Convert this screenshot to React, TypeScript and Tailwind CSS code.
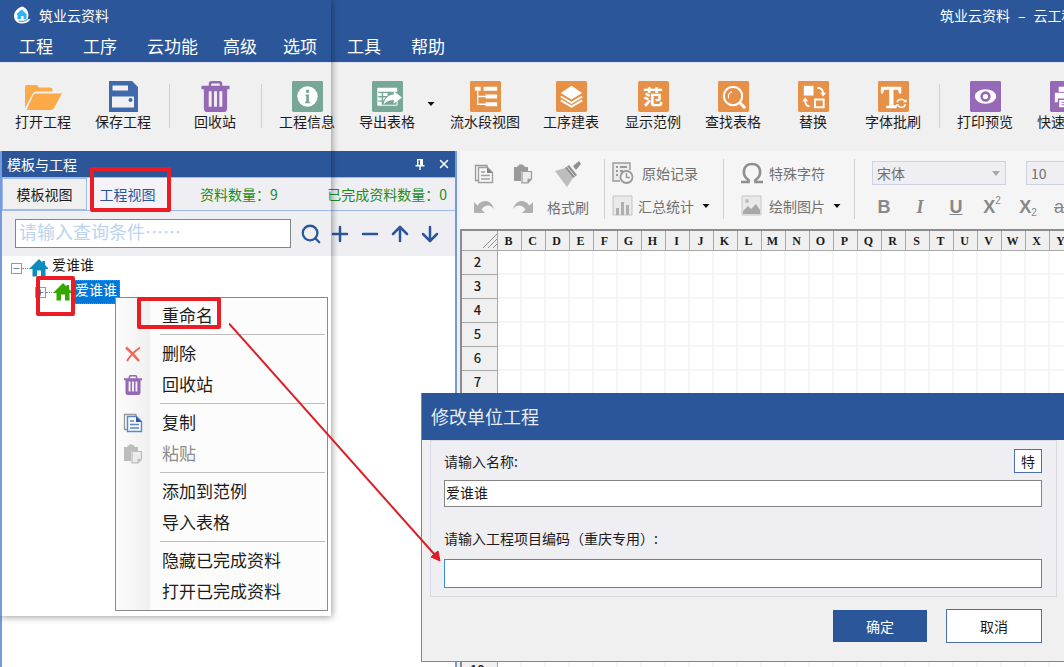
import type { ReactNode } from "react";
import { ArrowDown, ArrowUp, Minus, Plus, Search, X } from "lucide-react";

const SANS = "font-['Noto_Sans_CJK_SC',sans-serif]";

const menus = [
  { label: "工程", width: "w-16" },
  { label: "工序", width: "w-16" },
  { label: "云功能", width: "w-[76px]" },
  { label: "高级", width: "w-[60px]" },
  { label: "选项", width: "w-16" },
  { label: "工具", width: "w-16" },
  { label: "帮助", width: "w-16" },
];

const columns = "BCDEFGHIJKLMNOPQRSTUVWXYZ".split("");
const rows = Array.from({ length: 18 }, (_, i) => i + 2);

function Tile({ color, children }: { color: string; children: ReactNode }) {
  return (
    <svg viewBox="0 0 32 32" className="size-[31px]" aria-hidden="true">
      <rect width="32" height="32" rx="1.5" fill={color} />
      {children}
    </svg>
  );
}

// Solid bin with three slots cut through the body.
function TrashIcon({ className }: { className: string }) {
  return (
    <svg viewBox="0 0 32 32" className={className} aria-hidden="true" fill="#9568b4" fillRule="evenodd">
      <path d="M9 5V3Q9 0 12 0H20Q23 0 23 3V5H30.500V8.500H28V28Q28 32 24 32H8Q4 32 4 28V8.500H1.500V5ZM11.500 5H20.500V3.500Q20.500 2.500 19.500 2.500H12.500Q11.500 2.500 11.500 3.500ZM9 10.500V26.500H12V10.500ZM14.500 10.500V26.500H17.500V10.500ZM20 10.500V26.500H23V10.500Z" />
    </svg>
  );
}

function CopyIcon({ className, line, fold }: { className: string; line: string; fold: string }) {
  return (
    <svg viewBox="0 0 20 20" className={className} aria-hidden="true" fill="none">
      <path d="M4 16.500H1.500V1.500H13V3" stroke="#989898" strokeWidth="1.300" />
      <path d="M4.500 3.500H13.500L18.500 8.500V18.500H4.500Z" fill="#f6f8fb" stroke={line} strokeWidth="1.400" />
      <path d="M13 3.500L18.500 9H13Z" fill={fold} />
      <path d="M7 8H11M7 11.500H16M7 15H16" stroke={line} strokeWidth="1.600" />
    </svg>
  );
}

function PasteIcon({ className, color }: { className: string; color: string }) {
  return (
    <svg viewBox="0 0 20 20" className={className} aria-hidden="true">
      <path d="M1 3H4.500V1.500H6V0.500H10V1.500H11.500V3H15V7H8V17H1Z" fill={color} />
      <path d="M9 7.500H18.500V15L15 18.800H9Z" fill="#ebebeb" stroke={color} strokeWidth="1.200" />
      <path d="M14.500 19V14.800H18.500Z" fill={color} />
    </svg>
  );
}

function House({ color }: { color: string }) {
  return (
    <svg viewBox="0 0 18 18" className="size-[18px]" aria-hidden="true" fill={color}>
      <path d="M9 0L12.500 3.500V2H15V6L18 9V10H15.500V17.500H11V11.500H7V17.500H2.500V10H0V9Z" />
    </svg>
  );
}

function Caret() {
  return (
    <svg viewBox="0 0 8 4" className="h-1 w-2" aria-hidden="true">
      <path d="M0.500 0H7.500L4 4Z" fill="#111" />
    </svg>
  );
}

function Tool({ icon, label, width = "w-20" }: { icon: ReactNode; label: string; width?: string }) {
  return (
    <button type="button" className={`${width} flex shrink-0 flex-col items-center text-sm leading-[18px] whitespace-nowrap`}>
      {icon}
      {label}
    </button>
  );
}

function ToolDivider() {
  return (
    <div className="flex w-3 shrink-0 justify-center">
      <div className="mt-[3px] h-11 w-px bg-[#d0d0d0]" />
    </div>
  );
}

function TitleBar() {
  return (
    <header className="h-[62px] shrink-0 overflow-hidden bg-[#2b579a] text-white">
      <div className="flex h-[30px] items-center text-sm">
        <svg viewBox="0 0 18 18" className="ml-[13px] size-[18px]" aria-hidden="true">
          <path d="M9.500 0.500C5 1.500 1 5.500 1 10C1 14.500 4.500 17.500 8.500 17.500C12.500 17.500 16 16 17.500 13L14.500 13.500C17 8 14.500 2.500 9.500 0.500Z" fill="#fff" />
          <path d="M3.500 8L8.500 3.500L13.500 8V13H10.500V10H8V13H4.500V9Z" fill="#2cb5ee" />
          <path d="M5.500 15C9 16 12 15 14.500 13.500" fill="none" stroke="#2b579a" strokeWidth="0.800" />
        </svg>
        <span className="ml-2">筑业云资料</span>
        <span className="ml-auto w-[124px] shrink-0 overflow-hidden whitespace-nowrap">
          筑业云资料<span className="mx-2">–</span>云工程
        </span>
      </div>
      <nav className="flex h-8 items-center pl-[19px] text-[17px]">
        {menus.map((m) => (
          <button key={m.label} type="button" className={`${m.width} shrink-0 text-left`}>
            {m.label}
          </button>
        ))}
      </nav>
    </header>
  );
}

function MainToolbar() {
  const orange = "#e69147";
  return (
    <div className="flex h-[89px] shrink-0 overflow-hidden border-t border-[#dfe3f5] pt-[18px] pl-[3px]">
      <Tool
        label="打开工程"
        icon={
          <svg viewBox="0 0 40 31" className="h-[31px] w-10" aria-hidden="true" fill="#fbaa47">
            <path d="M2 27V6Q2 4 4 4H13Q15 4 16 6.500H27Q29.500 6.500 29.500 9V10.500H13Q10.500 10.500 9.500 13Z" />
            <path d="M13 12.500H39L31 27Q30 29 28 29H3.500L10 14.500Q11 12.500 13 12.500Z" />
          </svg>
        }
      />
      <Tool
        label="保存工程"
        icon={
          <svg viewBox="0 0 31 31" className="size-[31px]" aria-hidden="true">
            <path d="M1 0H24L30 6V31H1Z" fill="#4069ad" />
            <path d="M4.500 4.500H20V9.500H4.500ZM4 15.500H26V26.500H4Z" fill="#f0f0f0" />
            <circle cx="22.500" cy="19" r="2" fill="#4069ad" />
          </svg>
        }
      />
      <ToolDivider />
      <Tool label="回收站" icon={<TrashIcon className="size-[31px]" />} />
      <ToolDivider />
      <Tool
        label="工程信息"
        icon={
          <Tile color="#77a796">
            <circle cx="16" cy="16" r="10.500" fill="#fff" />
            <path d="M14.500 9H17.500V12H14.500ZM14 14H17.500V21.500H18.500V23H13.500V21.500H14.700V15.500H14Z" fill="#77a796" />
          </Tile>
        }
      />
      <Tool
        label="导出表格"
        icon={
          <Tile color="#77a796">
            <path d="M6 7H26V11H6ZM6 12.500H10V15.500H6ZM11.500 12.500H16V15.500H11.500ZM6 17H10V20H6ZM6 21.500H10V25H6ZM11.500 17H14L11.500 20Z" fill="#fff" />
            <path d="M6 7V25H26V21" fill="none" stroke="#fff" />
            <path d="M12 24C13 18 17 14 22.500 14V10.500L31 17L22.500 23.500V19.500C18 19.500 15 21 12 24Z" fill="#fff" />
          </Tile>
        }
      />
      <button type="button" aria-label="导出选项" className="flex h-[46px] w-3.5 shrink-0 items-center">
        <Caret />
      </button>
      <Tool
        label="流水段视图"
        width="w-[88px]"
        icon={
          <Tile color={orange}>
            <path d="M5 6H11V10H5ZM14 6H28V10H14ZM16 14H28V18H16ZM16 22H28V26H16Z" fill="#fff" />
            <path d="M8 10V24H16M8 16H16" fill="none" stroke="#fff" strokeWidth="1.300" />
          </Tile>
        }
      />
      <Tool
        label="工序建表"
        width="w-[84px]"
        icon={
          <Tile color={orange}>
            <path d="M16 5L27 12.500L16 19L5 12.500Z" fill="#fff" />
            <path d="M5 16L16 22.500L27 16M5 20L16 26.500L27 20" fill="none" stroke="#fff" strokeWidth="2" />
          </Tile>
        }
      />
      <Tool
        label="显示范例"
        icon={
          <span className="flex size-[31px] items-center justify-center rounded-xs bg-[#e69147] text-xl font-bold text-white">范</span>
        }
      />
      <Tool
        label="查找表格"
        icon={
          <Tile color={orange}>
            <circle cx="15.500" cy="15.500" r="9.500" fill="none" stroke="#fff" strokeWidth="2.200" />
            <path d="M22 22L28 28" stroke="#fff" strokeWidth="3" />
            <path d="M11 18C10 15 11.500 12 14.500 11" fill="none" stroke="#fff" strokeWidth="1.200" />
          </Tile>
        }
      />
      <Tool
        label="替换"
        icon={
          <Tile color={orange}>
            <path d="M6 5H16V15H6Z" fill="#fff" />
            <path d="M17.500 19H26.500V27H17.500ZM20 7C24 7 26 9 26 14M12 26C8.500 26 7.500 24 7.500 20" fill="none" stroke="#fff" strokeWidth="2" />
            <path d="M23 12H29L26 16ZM4.500 21H10.500L7.500 17Z" fill="#fff" />
          </Tile>
        }
      />
      <Tool
        label="字体批刷"
        icon={
          <Tile color={orange}>
            <path d="M3 6H24V13H22L20.500 9H16V25H19V28H8.500V25.500H11.500V9H6.500L5 13H3Z" fill="#fff" />
            <path d="M19.500 22C20.500 18.500 25 18 27.500 20.500M28.500 24C27.500 27.500 23 28 20.500 25.500" fill="none" stroke="#fff" strokeWidth="1.600" />
            <path d="M26 22H29.500V18.500ZM22 24H18.500V27.500Z" fill="#fff" />
          </Tile>
        }
      />
      <ToolDivider />
      <Tool
        label="打印预览"
        icon={
          <Tile color="#9568b8">
            <ellipse cx="16" cy="16" rx="11" ry="7.500" fill="#fff" />
            <circle cx="16" cy="16" r="4" fill="none" stroke="#9568b8" strokeWidth="2.600" />
          </Tile>
        }
      />
      <Tool
        label="快速打印"
        icon={
          <Tile color="#9568b8">
            <path d="M9 6H23V11H9ZM5 12H27V22H24V18H8V22H5ZM9.500 19.500H22.500V27H9.500Z" fill="#fff" />
            <path d="M12 22H20M12 24.500H20" stroke="#9568b8" />
          </Tile>
        }
      />
    </div>
  );
}

function Expander({ open }: { open: boolean }) {
  return (
    <button
      type="button"
      aria-label={open ? "折叠" : "展开"}
      className="flex size-[11px] items-center justify-center border border-[#989898] bg-white text-[#3b5b9a]"
    >
      {open ? <Minus size={9} /> : <Plus size={9} />}
    </button>
  );
}

function ProjectPanel() {
  return (
    <aside className="flex w-[457px] shrink-0 flex-col border-r-2 border-l-2 border-[#769bdc] bg-white">
      <div className="flex h-[26px] shrink-0 items-center bg-[#2b579a] pr-1 pl-[5px] text-sm text-white">
        <h2>模板与工程</h2>
        <button type="button" aria-label="固定" className="mr-3 ml-auto">
          <svg viewBox="0 0 10 12" className="h-3 w-2.5" aria-hidden="true" fill="#fff">
            <path d="M2 1H8V7H9.500V8.500H5.700V12H4.300V8.500H0.500V7H2ZM3.500 2.300V7H5V2.300Z" fillRule="evenodd" />
          </svg>
        </button>
        <button type="button" aria-label="关闭">
          <X size={14} strokeWidth={2.5} />
        </button>
      </div>

      <div className="flex h-[34px] shrink-0 items-center border-t border-b border-[#9bbcec] bg-[#eeeef3] pr-2 text-sm">
        <button type="button" className="h-8 w-[85px] border border-[#9bbcec] bg-[#f0f0f0]">
          模板视图
        </button>
        <button type="button" className="h-8 w-[82px] border-r border-[#c4d6f0] bg-[#f3f3f8] text-[#2b579a]">
          工程视图
        </button>
        <span className="ml-[31px] text-[#218c21]">资料数量：9</span>
        <span className="ml-auto text-[#218c21]">已完成资料数量：0</span>
      </div>

      <div className="flex h-[45px] shrink-0 items-center bg-[#eeeef3] pl-[13px] text-[#2b579a]">
        <input
          type="text"
          aria-label="查询条件"
          placeholder="请输入查询条件……"
          className="h-[29px] w-[276px] border border-[#858585] bg-white pr-1 pb-1.5 pl-[3px] text-lg leading-5 outline-none placeholder:text-[#bcd3ec]"
        />
        <div className="ml-[9px] flex items-center gap-1.5">
          <button type="button" aria-label="查询"><Search size={22} strokeWidth={2.5} /></button>
          <button type="button" aria-label="添加"><Plus size={24} strokeWidth={2.5} /></button>
          <button type="button" aria-label="移除"><Minus size={24} strokeWidth={2.5} /></button>
          <button type="button" aria-label="上移"><ArrowUp size={24} strokeWidth={2.5} /></button>
          <button type="button" aria-label="下移"><ArrowDown size={24} strokeWidth={2.5} /></button>
        </div>
      </div>

      <ul className="flex-1 pl-[9px] text-sm">
        <li className="flex h-6 items-center">
          <Expander open />
          <span className="w-2 border-t border-dotted border-[#888]" />
          <House color="#0d8dbd" />
          <span className="ml-1 h-6 leading-4">爱谁谁</span>
        </li>
        <li className="flex h-6 items-center pl-6">
          <Expander open={false} />
          <span className="w-2 border-t border-dotted border-[#888]" />
          <House color="#35a800" />
          <span className="h-6 border border-dotted border-[#c07830] bg-[#0078d7] px-0.5 leading-4 text-white">爱谁谁</span>
        </li>
      </ul>
    </aside>
  );
}

function FormatBar() {
  return (
    <div className="flex h-[78px] shrink-0 overflow-hidden rounded-tl-sm bg-[#f5f5f5] text-sm whitespace-nowrap text-[#707070]">
      <div className="grid shrink-0 grid-cols-[48px_30px_66px] grid-rows-[33px_33px] place-items-center pt-[6px]">
        <button type="button" aria-label="复制"><CopyIcon className="size-5" line="#a0a0a0" fold="#808080" /></button>
        <button type="button" aria-label="粘贴"><PasteIcon className="size-5" color="#9a9a9a" /></button>
        <svg viewBox="0 0 26 26" className="mr-1.5 size-[26px]" aria-hidden="true">
          <path d="M0 10L10 7L18 17L12 26Z" fill="#bdbdbd" />
          <path d="M10 7L14 4L22 14L18 17ZM18 5L24 0L26 3L21 9Z" fill="#8f8f8f" />
          <path d="M12 5.500L20 15.500" stroke="#dedede" />
        </svg>
        <button type="button" aria-label="撤销">
          <svg viewBox="0 0 20 14" className="h-3.5 w-5" aria-hidden="true" fill="#b0b0b0">
            <path d="M0 2L3.500 5.500C8 -1 17 -1 20 9C16 4 11 4.500 7.500 9.500L11 13H0Z" />
          </svg>
        </button>
        <button type="button" aria-label="重做">
          <svg viewBox="0 0 20 14" className="h-3.5 w-5" aria-hidden="true" fill="#b0b0b0">
            <path d="M20 2L16.500 5.500C12 -1 3 -1 0 9C4 4 9 4.500 12.500 9.500L9 13H20Z" />
          </svg>
        </button>
        <button type="button" className="pr-1.5">格式刷</button>
      </div>
      <div className="mt-2 h-[60px] w-px shrink-0 bg-[#cfcfcf]" />

      <div className="flex w-[118px] shrink-0 flex-col pt-[5px] pl-[7px]">
        <button type="button" className="flex h-[33px] items-center">
          <svg viewBox="0 0 22 22" className="size-[22px]" aria-hidden="true" fill="none" stroke="#9a9a9a">
            <path d="M8 19H1V1H18V8" strokeWidth="1.400" fill="#ececec" />
            <path d="M4 5H6M8 5H15M4 9H6M8 9H11M4 13H6" strokeWidth="1.800" />
            <circle cx="14.500" cy="15" r="6" strokeWidth="1.800" fill="#f5f5f5" />
            <path d="M14.500 11V15.500H18" strokeWidth="1.500" />
          </svg>
          <span className="ml-2">原始记录</span>
        </button>
        <button type="button" className="flex h-[33px] items-center">
          <svg viewBox="0 0 22 22" className="size-[22px]" aria-hidden="true">
            <path d="M1 1H20V20H1Z" fill="#e9e9e9" stroke="#c4c4c4" />
            <path d="M4 13H7V20H4ZM9 7H12V20H9ZM14 10H17V20H14Z" fill="#b0b0b0" />
          </svg>
          <span className="mr-2 ml-1">汇总统计</span>
          <Caret />
        </button>
      </div>
      <div className="mt-2 h-[60px] w-px shrink-0 bg-[#cfcfcf]" />

      <div className="flex w-[130px] shrink-0 flex-col pt-[5px] pl-[17px]">
        <button type="button" className="flex h-[33px] items-center">
          <svg viewBox="0 0 22 22" className="size-[22px]" aria-hidden="true" fill="none" stroke="#8f8f8f" strokeWidth="2.600">
            <path d="M0 20H7.500V18C0 13 2 2 11 2C20 2 22 13 14.500 18V20H22" />
          </svg>
          <span className="ml-1.5">特殊字符</span>
        </button>
        <button type="button" className="flex h-[33px] items-center">
          <svg viewBox="0 0 22 22" className="size-[22px]" aria-hidden="true">
            <path d="M1 1H20V20H1Z" fill="#e9e9e9" stroke="#c8c8c8" />
            <circle cx="6" cy="6" r="2" fill="#bcbcbc" />
            <path d="M2 19V16L7 11L10 14L15 9L19 15V19Z" fill="#a8a8a8" />
          </svg>
          <span className="mr-2 ml-1.5">绘制图片</span>
          <Caret />
        </button>
      </div>
      <div className="mt-2 h-[60px] w-px shrink-0 bg-[#cfcfcf]" />

      <div className="min-w-0 flex-1 overflow-hidden pt-[5px] pl-[11px]">
        <div className="flex h-[33px] items-center gap-5 pl-1.5">
          <div className="relative shrink-0">
            <select aria-label="字体" className="h-6 w-[134px] appearance-none border border-[#cfd2e2] bg-[#eeeef3] pl-1 text-sm leading-5">
              <option>宋体</option>
            </select>
            <svg viewBox="0 0 8 5" className="pointer-events-none absolute top-[10px] right-[6px] h-[5px] w-2" aria-hidden="true">
              <path d="M0 0H8L4 5Z" fill="#a8a8a8" />
            </svg>
          </div>
          <select aria-label="字号" className="h-6 w-20 shrink-0 appearance-none border border-[#cfd2e2] bg-[#eeeef3] pl-1 text-sm leading-5">
            <option>10</option>
          </select>
        </div>
        <div className="flex h-9 items-center font-['Liberation_Sans',sans-serif] text-lg leading-6 font-bold text-[#888]">
          <button type="button" className="w-9 shrink-0">B</button>
          <button type="button" className="w-9 shrink-0 font-['Liberation_Serif',serif] italic">I</button>
          <button type="button" className="w-9 shrink-0 underline">U</button>
          <button type="button" className="flex w-9 shrink-0 justify-center">
            X<span className="text-[10px] leading-3 font-normal">2</span>
          </button>
          <button type="button" className="flex w-9 shrink-0 items-end justify-center">
            X<span className="text-[10px] leading-3 font-normal">2</span>
          </button>
          <button type="button" className="ml-2 w-9 shrink-0 text-left font-normal line-through">abc</button>
        </div>
      </div>
    </div>
  );
}

function Sheet() {
  return (
    <div className="min-h-0 flex-1 overflow-hidden border-t-2 border-l-2 border-[#8c8c8c] bg-white">
      <table className="w-[636px] table-fixed border-separate border-spacing-0">
        <thead>
          <tr className="h-5">
            <th className="h-5 w-9 border-r border-b border-[#a8a8a8] bg-[#f0f0f0] p-0">
              <svg viewBox="0 0 14 14" className="ml-auto size-3.5" aria-hidden="true" stroke="#909090">
                <path d="M0 14L14 0M5 14L14 5M10 14L14 10" />
              </svg>
            </th>
            {columns.map((c) => (
              <th
                key={c}
                scope="col"
                className="h-5 w-6 border-r border-b border-[#a8a8a8] bg-[#f0f0f0] p-0 pr-0.5 font-['Liberation_Serif',serif] text-xs leading-4 font-bold"
              >
                {c}
              </th>
            ))}
          </tr>
        </thead>
        <tbody>
          {rows.map((r) => (
            <tr key={r} className="h-6">
              <th scope="row" className="h-6 border-r border-b border-[#a8a8a8] bg-[#f0f0f0] p-0 pr-1 pb-0.5 text-[13px] leading-5 font-medium">
                {r}
              </th>
              {columns.map((c) => (
                <td key={c} className="h-6 border-r-2 border-b-2 border-[#f5f5f5] p-0" />
              ))}
            </tr>
          ))}
        </tbody>
      </table>
    </div>
  );
}

function MenuItem({ label, icon, muted }: { label: string; icon?: ReactNode; muted?: boolean }) {
  return (
    <button
      type="button"
      role="menuitem"
      disabled={muted}
      className="flex h-[31px] w-full items-center text-left text-[17px] text-[#1c1c1c] disabled:text-[#8c8c8c]"
    >
      <span className="flex w-[34px] justify-center">{icon}</span>
      <span className="ml-3 pb-0.5">{label}</span>
    </button>
  );
}

function MenuRule() {
  return (
    <div role="separator" className="flex h-[7px] items-center pr-0.5 pl-11">
      <div className="h-px w-full bg-[#bdbdbd]" />
    </div>
  );
}

function ContextMenu() {
  return (
    <div
      role="menu"
      className="absolute top-[297px] left-[115px] w-[213px] border border-[#8a8a8a] bg-[linear-gradient(to_right,#fcfcfc_0,#f0f0f0_34px,#fcfcfc_34px)] pt-0.5 pb-[3px]"
    >
      <MenuItem label="重命名" />
      <MenuRule />
      <MenuItem
        label="删除"
        icon={
          <svg viewBox="0 0 16 16" className="size-4" aria-hidden="true" fill="none" stroke="#f0685a">
            <path d="M1 1.500C5 5 10 10 14 15" strokeWidth="2.600" />
            <path d="M15 1.500C10 5 5 10 2 15" strokeWidth="2" />
          </svg>
        }
      />
      <MenuItem label="回收站" icon={<TrashIcon className="size-5" />} />
      <MenuRule />
      <MenuItem label="复制" icon={<CopyIcon className="size-5" line="#5b87c5" fold="#2b579a" />} />
      <MenuItem label="粘贴" muted icon={<PasteIcon className="size-5" color="#bcbcbc" />} />
      <MenuRule />
      <MenuItem label="添加到范例" />
      <MenuItem label="导入表格" />
      <MenuRule />
      <MenuItem label="隐藏已完成资料" />
      <MenuItem label="打开已完成资料" />
    </div>
  );
}

function RenameDialog() {
  return (
    <div
      role="dialog"
      aria-label="修改单位工程"
      className="absolute top-[393px] right-0 left-[421px] border-b border-l border-[#7b8794] bg-[#f0f0f0] text-sm"
    >
      <h2 className="flex h-[47px] items-center bg-[#2b579a] pb-0.5 pl-[9px] text-lg text-[#e6edf7]">修改单位工程</h2>
      <form onSubmit={(e) => e.preventDefault()}>
        <div className="mr-[7px] ml-2 border border-[#d9d9e4] bg-[#eeeef3] pt-2 pr-3.5 pb-2 pl-[13px]">
          <div className="flex items-center justify-between">
            <label htmlFor="unit-name">请输入名称:</label>
            <button type="button" className="h-6 w-7 border border-[#4a70ad] bg-white">特</button>
          </div>
          <input
            id="unit-name"
            type="text"
            defaultValue="爱谁谁"
            className="mt-[7px] block h-[27px] w-full border border-[#858585] bg-white px-px pb-1 leading-5 outline-none"
          />
          <label htmlFor="unit-code" className="mt-[21px] block leading-5">请输入工程项目编码（重庆专用）:</label>
          <input
            id="unit-code"
            type="text"
            className="mt-[11px] block h-[29px] w-full border border-[#3a8fd4] bg-white px-1 outline-none"
          />
        </div>
        <div className="flex items-center justify-end gap-[19px] pt-3 pr-[22px] pb-[18px]">
          <button type="submit" className="h-8 w-[94px] bg-[#2b579a] text-white">确定</button>
          <button type="button" className="h-[34px] w-24 border border-[#4a70ad] bg-white">取消</button>
        </div>
      </form>
    </div>
  );
}

// Red guide marks that walk the reader from the tree node to the dialog field.
function GuideMarks() {
  return (
    <div className="pointer-events-none absolute inset-0 overflow-hidden">
      <div className="absolute top-[167px] left-[90px] h-[45px] w-[81px] rounded-xs border-4 border-[#eb1c24]" />
      <div className="absolute top-[276px] left-9 h-10 w-[39px] rounded-xs border-4 border-[#eb1c24]" />
      <div className="absolute top-[297px] left-[137px] h-8 w-[84px] rounded-xs border-4 border-[#eb1c24]" />
      <svg viewBox="0 0 212 240" className="absolute top-[323px] left-[229px] h-60 w-[212px]" aria-hidden="true">
        <path d="M0 0.500L206 232" stroke="#dc1f26" strokeWidth="2" />
        <path d="M211 238L202 234L205 231L209 228Z" fill="#dc1f26" stroke="#dc1f26" />
      </svg>
    </div>
  );
}

export default function App() {
  return (
    <div className={`${SANS} relative flex h-screen flex-col overflow-hidden bg-[#f0f0f0] text-[#1c1c1c]`}>
      <TitleBar />
      <MainToolbar />
      <main className="flex min-h-0 flex-1 gap-[3px]">
        <ProjectPanel />
        <section className="flex min-w-0 flex-1 flex-col">
          <FormatBar />
          <Sheet />
        </section>
      </main>
      {/* floating sheet edge over the left part of the window */}
      <div className="pointer-events-none absolute top-0 left-0 h-[616px] w-[331px] shadow-[1px_1px_7px_rgba(0,0,0,0.4)]" />
      <ContextMenu />
      <RenameDialog />
      <GuideMarks />
    </div>
  );
}
